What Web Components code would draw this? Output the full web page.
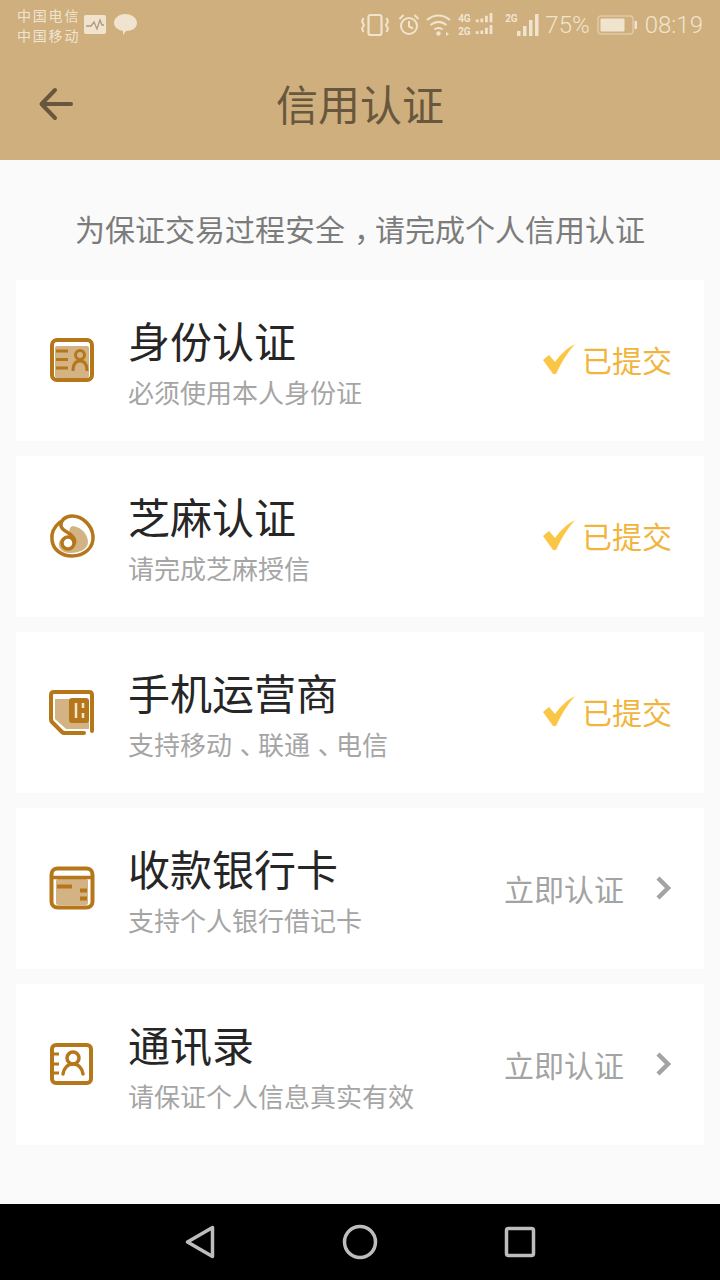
<!DOCTYPE html>
<html lang="zh">
<head>
<meta charset="utf-8">
<title>信用认证</title>
<style>
  html, body { margin: 0; padding: 0; }
  body { width: 720px; height: 1280px; background: #fafafa; font-family: "Noto Sans CJK SC", "Noto Sans", sans-serif; overflow: hidden; display: flex; flex-direction: column; }
  main-list { flex: 1; }
</style>
</head>
<body>
<app-header title="信用认证"></app-header>
<main-list>
  <credit-row name="身份认证" sub="必须使用本人身份证" icon="id" done></credit-row>
  <credit-row name="芝麻认证" sub="请完成芝麻授信" icon="sesame" done></credit-row>
  <credit-row name="手机运营商" sub="支持移动<span class='punct'>、</span>联通<span class='punct'>、</span>电信" icon="sim" done></credit-row>
  <credit-row name="收款银行卡" sub="支持个人银行借记卡" icon="bank"></credit-row>
  <credit-row name="通讯录" sub="请保证个人信息真实有效" icon="contacts"></credit-row>
</main-list>
<nav-bar></nav-bar>

<script>
const ICONS = {
  id: `<rect x="9" y="12" width="34" height="32" rx="2" fill="#d3b384"/>
       <rect x="6" y="6" width="40" height="40" rx="5" fill="none" stroke="#b5771a" stroke-width="4"/>
       <path d="M10 17h12M10 25.500h12M10 34h12" stroke="#b5771a" stroke-width="3" fill="none"/>
       <circle cx="34" cy="21" r="4.500" fill="none" stroke="#b5771a" stroke-width="3"/>
       <path d="M27 37c0-7 3-10 7-10s7 3 7 10" fill="none" stroke="#b5771a" stroke-width="3"/>`,
  sesame: `<path d="M27 16C36 17 42 25 42 32C42 39 34 43 24 43C16 43 12 38 13 33C14 28 19 26 23 27C24 22 22 17 27 16Z" fill="#d3b384"/>
       <path d="M14 12C8 17 5 23 6 30C7 40 16 46 26 46C38 46 48 38 47 26C46 15 36 6 26 6C19 6 14 11 15 16C16 21 23 22 26 26C28 28 29 31 28.500 33" fill="none" stroke="#b5771a" stroke-width="3.500" stroke-linecap="round"/>
       <circle cx="22" cy="33" r="6" fill="#fff" stroke="#b5771a" stroke-width="3.500"/>`,
  sim: `<path d="M9 13h30l4 4v26H20L9 33z" fill="#d3b384"/>
       <path d="M46 45V9c0-2-1-3-3-3H8C6 6 5 7 5 9v24c0 1 0 2 1 3l10 10c1 1 1 1 2 1h20" fill="none" stroke="#b5771a" stroke-width="4" stroke-linecap="round"/>
       <rect x="23" y="12" width="20" height="25" rx="3" fill="#b5771a"/>
       <path d="M30 17v15M37 17v5M37 27v5" stroke="#f3e6d0" stroke-width="2.500" fill="none"/>`,
  bank: `<rect x="10" y="17" width="32" height="26" rx="2" fill="#d3b384"/>
       <rect x="5.500" y="6.500" width="41" height="39" rx="6" fill="none" stroke="#b5771a" stroke-width="4"/>
       <path d="M5.500 15.500h41" stroke="#b5771a" stroke-width="3.500"/>
       <path d="M11 24.500h15" stroke="#b5771a" stroke-width="4"/>
       <path d="M34 28.500h7M34 36.500h7" stroke="#b5771a" stroke-width="4"/>`,
  contacts: `<rect x="6" y="7" width="39" height="38" rx="4" fill="none" stroke="#b5771a" stroke-width="4"/>
       <path d="M4 16h9M4 26h9M4 35h9" stroke="#b5771a" stroke-width="3"/>
       <circle cx="27" cy="20" r="6" fill="none" stroke="#b5771a" stroke-width="3.500"/>
       <path d="M17 36c1-6 5-10 10-10s9 4 10 10" fill="none" stroke="#b5771a" stroke-width="3.500" stroke-linecap="round"/>`
};

class StatusBar extends HTMLElement {
  constructor() {
    super();
    this.attachShadow({ mode: 'open' });
    this.shadowRoot.innerHTML = `
      <style>
        :host { display: flex; align-items: center; justify-content: space-between; height: 50px; padding: 0 17px; color: #f0e4cf; font-family: "Noto Sans CJK SC", sans-serif; }
        .left, .right { display: flex; align-items: center; }
        .carrier { font-size: 14px; letter-spacing: 1.800px; line-height: 20.500px; width: 65px; }
        .right { font-size: 24px; font-family: "Roboto", sans-serif; font-weight: 300; }
        svg { display: block; }
        .sig { display: flex; font: 700 10px/13px "Roboto", sans-serif; letter-spacing: -0.300px; margin-left: 7px; width: 38px; }
        .sig2 { display: flex; font: 700 10px/10px "Roboto", sans-serif; letter-spacing: -0.300px; margin-left: 9px; width: 35px; height: 22px; }
      </style>
      <div class="left">
        <div class="carrier">中国电信<br>中国移动</div>
        <svg width="58" height="26" viewBox="0 0 58 26">
          <rect x="2" y="3" width="22" height="19" rx="2" fill="#f0e4cf"/>
          <path d="M4 14h5l3-4 3 7 3-9 2 5h2" fill="none" stroke="#b0997a" stroke-width="1.300"/>
          <path d="M43 2c7 0 12 4 12 9s-5 8-11 8l-3 4v-4c-5-1-9-4-9-8 0-5 5-9 11-9z" fill="#f0e4cf"/>
        </svg>
      </div>
      <div class="right">
        <svg width="28" height="26" viewBox="0 0 28 26" fill="none" stroke="#f0e4cf" stroke-width="2.200">
          <rect x="7.500" y="3" width="13" height="20" rx="2"/>
          <path d="M2.500 6l-1.500 3.500 2 3.500-2 3.500 1.500 3.500M25.500 6l1.500 3.500-2 3.500 2 3.500-1.500 3.500" stroke-width="2"/>
        </svg>
        <svg width="22" height="26" viewBox="0 0 22 26" fill="none" stroke="#f0e4cf" stroke-width="2" style="margin-left:9px">
          <circle cx="11" cy="14" r="8"/><path d="M11 9v5.500l4 2M1.500 7l4-4M20.500 7l-4-4"/>
        </svg>
        <svg width="25" height="26" viewBox="0 0 25 26" fill="none" stroke="#f0e4cf" stroke-width="2.200" style="margin-left:6px">
          <path d="M1 8c7-6 16-6 23 0M4.500 13c5-4 11-4 16 0M8.500 17.500c2-2 6-2 8 0"/>
          <circle cx="12.500" cy="21.500" r="2.200" fill="#f0e4cf" stroke="none"/>
          <path d="M20 20l3 2-3 2z" fill="#f0e4cf" stroke="none"/>
        </svg>
        <div class="sig">
          <div>4G<br>2G</div>
          <svg width="24" height="24" viewBox="0 0 24 24" fill="#f0e4cf" style="margin-left:4px">
            <path d="M2 7h3v3H2zM7 6h3v4H7zM12 3h3v7h-3zM17 0h3v10h-3z"/>
            <path d="M2 20h3v3H2zM7 19h3v4H7zM12 16h3v7h-3zM17 13h3v10h-3z"/>
          </svg>
        </div>
        <div class="sig2">
          <div>2G</div>
          <svg width="24" height="22" viewBox="0 0 24 22" fill="#f0e4cf" style="margin-left:-1px">
            <path d="M1 17h3.500v5H1zM7 12h3.500v10H7zM13 6h3.500v16H13zM19 0h3.500v22H19z"/>
          </svg>
        </div>
        <span style="margin-left:5px">75%</span>
        <svg width="40" height="26" viewBox="0 0 40 26" style="margin-left:7px">
          <rect x="1" y="4" width="35" height="18" rx="3" fill="none" stroke="#e0cba7" stroke-width="1.500"/>
          <rect x="3.500" y="6.500" width="24" height="13" rx="1" fill="#f0e4cf"/>
          <rect x="37.500" y="9" width="2.500" height="8" fill="#f0e4cf"/>
        </svg>
        <span style="margin-left:8px">08:19</span>
      </div>`;
  }
}
customElements.define('status-bar', StatusBar);

class AppHeader extends HTMLElement {
  constructor() {
    super();
    this.attachShadow({ mode: 'open' });
    this.shadowRoot.innerHTML = `
      <style>
        :host { display: block; background: #cfaf7d; height: 160px; }
        .bar { position: relative; display: flex; align-items: center; justify-content: center; height: 110px; }
        h1 { margin: 0 0 4px; font-size: 42px; font-weight: 400; color: #69573d; line-height: 60px; }
        svg { position: absolute; left: 38px; top: 36px; }
      </style>
      <status-bar></status-bar>
      <div class="bar">
        <svg width="36" height="36" viewBox="0 0 36 36" fill="none" stroke="#69573d" stroke-width="4" stroke-linecap="round" stroke-linejoin="round">
          <path d="M33 18H4M17 4L3.500 18 17 32"/>
        </svg>
        <h1>${this.getAttribute('title')}</h1>
      </div>`;
  }
}
customElements.define('app-header', AppHeader);

class MainList extends HTMLElement {
  constructor() {
    super();
    this.attachShadow({ mode: 'open' });
    this.shadowRoot.innerHTML = `
      <style>
        :host { display: block; padding: 0 16px; }
        p { margin: 0; height: 120px; padding-top: 16px; box-sizing: border-box; display: flex; align-items: center; justify-content: center; font-size: 30px; color: #7c7c7c; }
        .punct { padding-left: 0.3em; letter-spacing: -0.3em; }
        .rows { display: flex; flex-direction: column; gap: 15px; }
      </style>
      <p><span>为保证交易过程安全<span class="punct">，</span>请完成个人信用认证</span></p>
      <div class="rows"><slot></slot></div>`;
  }
}
customElements.define('main-list', MainList);

class CreditRow extends HTMLElement {
  constructor() {
    super();
    this.attachShadow({ mode: 'open' });
    const done = this.hasAttribute('done');
    const right = done
      ? `<svg class="check" width="34" height="32" viewBox="0 0 34 32"><path d="M1 17l6-5 6 7C18 12 25 5 33 1 25 10 19 20 14 31h-3z" fill="#fbc546"/></svg><span class="ok">已提交</span>`
      : `<span class="todo">立即认证</span><svg class="arrow" width="18" height="26" viewBox="0 0 18 26" fill="none" stroke="#a3a3a3" stroke-width="4.500"><path d="M4 3l10 10L4 23"/></svg>`;
    this.shadowRoot.innerHTML = `
      <style>
        :host { display: flex; align-items: center; height: 161px; background: #fff; padding: 0 32px 0 30px; box-sizing: border-box; }
        .icon { width: 58px; height: 52px; margin: -2px 24px 0 0; flex: none; }
        .text { flex: 1; margin-top: -2px; }
        .name { font-size: 42px; line-height: 62px; color: #262626; }
        .sub { font-size: 26px; line-height: 38px; color: #a5a5a5; margin-top: 2px; }
        .punct { padding-left: 0.3em; letter-spacing: -0.3em; }
        .ok { font-size: 30px; color: #f1b53c; margin: -4px 0 0 6px; }
        .todo { font-size: 30px; color: #a3a3a3; margin: -2px 30px 0 0; }
        svg { display: block; }
        .check { margin-top: -4px; }
        .arrow { margin-top: -2px; }
      </style>
      <svg class="icon" viewBox="0 0 58 52">${ICONS[this.getAttribute('icon')]}</svg>
      <div class="text">
        <div class="name">${this.getAttribute('name')}</div>
        <div class="sub">${this.getAttribute('sub')}</div>
      </div>
      ${right}`;
  }
}
customElements.define('credit-row', CreditRow);

class NavBar extends HTMLElement {
  constructor() {
    super();
    this.attachShadow({ mode: 'open' });
    this.shadowRoot.innerHTML = `
      <style>
        :host { display: block; height: 76px; background: #000; }
        svg { display: block; }
      </style>
      <svg width="720" height="76" viewBox="0 0 720 76" fill="none" stroke="#bdbdbd" stroke-width="3.500" stroke-linejoin="round">
        <path d="M212.500 23.500v29L187.500 38z"/>
        <circle cx="360" cy="38" r="15.500"/>
        <rect x="506.500" y="24.500" width="27" height="27" rx="2"/>
      </svg>`;
  }
}
customElements.define('nav-bar', NavBar);
</script>
</body>
</html>
